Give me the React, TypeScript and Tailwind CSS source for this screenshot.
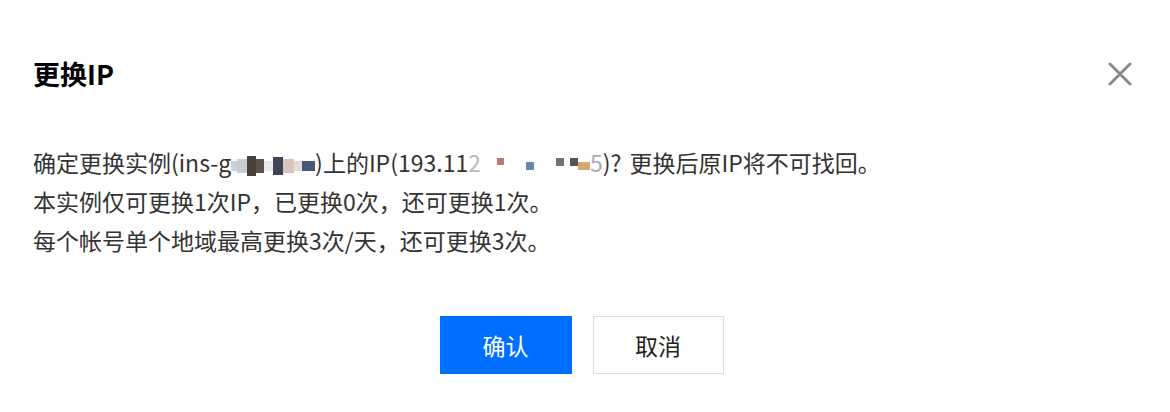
const font = { fontFamily: '"Noto Sans CJK SC", "Noto Sans", sans-serif' };

function Block({ w, h, c, className = "" }: { w: number; h: number; c: string; className?: string }) {
  return (
    <span
      className={`inline-block align-middle ${className}`}
      style={{ width: w, height: h, background: c }}
    />
  );
}

export default function App() {
  return (
    <div className="w-[1170px] h-[412px] bg-white px-[33px] pt-[56px]" style={font}>
      <div className="flex items-center justify-between">
        <h2 className="text-[27px] leading-[36px] font-bold text-black">更换IP</h2>
        <button type="button" className="mr-[5px] text-[#8a8a8a]">
          <svg width="24" height="24" viewBox="0 0 24 24" fill="none" stroke="currentColor" strokeWidth="3" strokeLinecap="round">
            <path d="M2 2L22 22M22 2L2 22" />
          </svg>
        </button>
      </div>

      <div className="mt-[51px] text-[23px] leading-[39px] text-[#333]">
        <p>
          确定更换实例(ins-g
          <span className="inline-flex items-center align-middle">
            <Block w={6} h={10} c="#c9d3dc" />
            <Block w={10} h={14} c="#c5cdd6" />
            <Block w={9} h={20} c="#4c4038" />
            <Block w={8} h={14} c="#5c5048" />
            <Block w={9} h={10} c="#eaeaea" />
            <Block w={10} h={18} c="#3e4456" />
            <Block w={11} h={14} c="#d8c6ba" />
            <Block w={8} h={10} c="#e6dcd6" />
            <Block w={13} h={10} c="#48587a" />
          </span>
          )上的IP(193.11
          <span className="text-[#bbb]">2</span>
          <span className="inline-flex items-center align-middle gap-0">
            <span className="inline-block w-[16px]" />
            <Block w={7} h={7} c="#b87a70" className="-translate-y-[4px]" />
            <span className="inline-block w-[22px]" />
            <Block w={8} h={8} c="#6a88a6" />
            <span className="inline-block w-[22px]" />
            <Block w={8} h={8} c="#707070" className="-translate-y-[4px]" />
            <span className="inline-block w-[6px]" />
            <Block w={8} h={8} c="#555" className="-translate-y-[4px]" />
            <Block w={12} h={8} c="#d6a676" />
          </span>
          <span className="text-[#aaa]">5</span>)?
          <span className="inline-block w-[8px]" />
          更换后原IP将不可找回。
        </p>
        <p>本实例仅可更换1次IP，已更换0次，还可更换1次。</p>
        <p>每个帐号单个地域最高更换3次/天，还可更换3次。</p>
      </div>

      <div className="mt-[56px] flex justify-center gap-[21px] pr-[7px]">
        <button
          type="button"
          className="w-[132px] h-[58px] bg-[#006eff] text-white text-[23px]"
        >
          确认
        </button>
        <button
          type="button"
          className="w-[131px] h-[58px] bg-white border border-[#dcdcdc] text-[#222] text-[23px]"
        >
          取消
        </button>
      </div>
    </div>
  );
}
